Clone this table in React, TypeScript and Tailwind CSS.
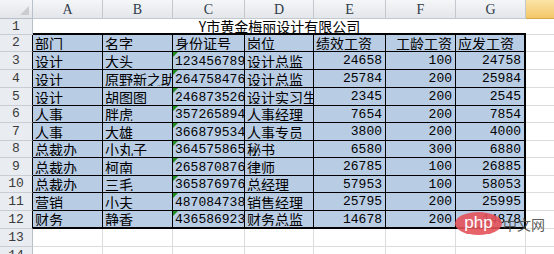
const colLetters = ["A", "B", "C", "D", "E", "F", "G"];
const colWidths = ["w-[70px]", "w-[70px]", "w-[72px]", "w-[69px]", "w-[72px]", "w-[70px]", "w-[70px]"];

// heights of rows 2..12 (the blue table)
const tableHeights = [
  "h-[17px]", "h-[18px]", "h-[18px]", "h-[18px]", "h-[17px]", "h-[18px]",
  "h-[17px]", "h-[18px]", "h-[17px]", "h-[18px]", "h-[18px]",
];

const data: string[][] = [
  ["部门", "名字", "身份证号", "岗位", "绩效工资", "工龄工资", "应发工资"],
  ["设计", "大头", "123456789012345678", "设计总监", "24658", "100", "24758"],
  ["设计", "原野新之助", "264758476012345678", "设计总监", "25784", "200", "25984"],
  ["设计", "胡图图", "246873526012345678", "设计实习生", "2345", "200", "2545"],
  ["人事", "胖虎", "357265894012345678", "人事经理", "7654", "200", "7854"],
  ["人事", "大雄", "366879534012345678", "人事专员", "3800", "200", "4000"],
  ["总裁办", "小丸子", "364575865012345678", "秘书", "6580", "300", "6880"],
  ["总裁办", "柯南", "265870876012345678", "律师", "26785", "100", "26885"],
  ["总裁办", "三毛", "365876976012345678", "总经理", "57953", "100", "58053"],
  ["营销", "小夫", "487084738012345678", "销售经理", "25795", "200", "25995"],
  ["财务", "静香", "436586923012345678", "财务总监", "14678", "200", "14878"],
];

const cjk = "font-['Noto_Sans_CJK_SC','Noto_Sans',sans-serif]";
const mono = "font-['Liberation_Mono','Noto_Sans_CJK_SC',monospace]";

function RowHead({ n, h, dark }: { n: number; h: string; dark?: boolean }) {
  return (
    <div
      className={`${h} w-[33px] shrink-0 flex items-center justify-center border-b border-[#c8cdd4] bg-[#e9ecf0] text-[13px] text-[#3a3a3a] ${mono} ${
        dark ? "border-r border-r-black" : "border-r border-r-[#b9c0c9]"
      }`}
    >
      {n}
    </div>
  );
}

function TableCell({ value, col, row, last }: { value: string; col: number; row: number; last: boolean }) {
  const isHeader = row === 0;
  const isNumber = !isHeader && col >= 4;
  const isId = !isHeader && col === 2;
  const right = isNumber || (isHeader && col === 5);
  const rightBorder = col === 6 ? "border-r-2" : "border-r";
  const bottomBorder = last ? "border-b-2" : "border-b";
  return (
    <div
      className={`${colWidths[col]} relative shrink-0 h-full flex items-center overflow-hidden whitespace-nowrap bg-[#b8cce4] border-black ${rightBorder} ${bottomBorder} ${
        right ? "justify-end pr-[3px]" : "justify-start pl-[2px]"
      } ${isNumber || isId ? `${mono} text-[13px]` : `${cjk} text-[14px]`} text-black leading-none`}
    >
      {isId && (
        <span className="absolute left-0 top-0 h-0 w-0 border-t-[5px] border-r-[5px] border-t-[#1e8c1e] border-r-transparent" />
      )}
      <span className={`overflow-hidden ${isId ? "pt-[1px]" : ""}`}>{value}</span>
    </div>
  );
}

function EmptyCell({ w }: { w: string }) {
  return <div className={`${w} h-full shrink-0 border-r border-b border-[#dadcde]`} />;
}

export default function App() {
  return (
    <div className="relative w-[554px] h-[254px] overflow-hidden bg-white">
      {/* column headers */}
      <div className="flex h-[19px]">
        <div className="relative w-[33px] shrink-0 border-r border-b border-[#b9c0c9] bg-gradient-to-b from-[#f4f5f7] to-[#e2e5e9]">
          <span className="absolute right-[3px] bottom-[3px] h-0 w-0 border-b-[9px] border-l-[9px] border-b-[#c9ccd1] border-l-transparent" />
        </div>
        {colLetters.map((c, i) => (
          <div
            key={c}
            className={`${colWidths[i]} shrink-0 flex items-center justify-center border-r border-b border-[#c3c8ce] bg-gradient-to-b from-[#f5f6f8] to-[#e3e6ea] text-[14px] text-[#2f3b4a] font-['Liberation_Serif',serif]`}
          >
            {c}
          </div>
        ))}
        <div className="w-[70px] shrink-0 flex items-center justify-center border-b border-[#d6a84e] bg-gradient-to-b from-[#fbe3a6] to-[#f3c767] text-[14px] text-[#2f3b4a] font-['Liberation_Serif',serif]">
          H
        </div>
      </div>

      {/* row 1: merged title */}
      <div className="flex h-[16px]">
        <RowHead n={1} h="h-[16px]" />
        <div
          className={`w-[493px] shrink-0 flex items-center justify-center border-b-2 border-black text-[14px] leading-none text-black ${cjk}`}
        >
          Y市黄金梅丽设计有限公司
        </div>
        <div className="flex-1 border-b border-[#dadcde]" />
      </div>

      {/* rows 2-12 */}
      {data.map((r, ri) => (
        <div key={ri} className={`flex ${tableHeights[ri]}`}>
          <RowHead n={ri + 2} h={tableHeights[ri]} dark />
          {r.map((v, ci) => (
            <TableCell key={ci} value={v} col={ci} row={ri} last={ri === data.length - 1} />
          ))}
          <div className="flex-1 border-b border-[#dadcde]" />
        </div>
      ))}

      {/* rows 13-14 empty */}
      {[13, 14].map((n) => (
        <div key={n} className="flex h-[18px]">
          <RowHead n={n} h="h-[18px]" />
          {colWidths.map((w, i) => (
            <EmptyCell key={i} w={w} />
          ))}
          <div className="flex-1 border-b border-[#dadcde]" />
        </div>
      ))}

      {/* watermark */}
      <div className="absolute left-[455px] top-[212px] flex items-center">
        <div className="flex h-[23px] w-[47px] items-center justify-center rounded-[50%] bg-[#e3525a]/90 text-[17px] leading-none text-white font-['Liberation_Sans',sans-serif] pb-[3px]">
          php
        </div>
        <span className={`ml-[1px] text-[14px] leading-none text-[#4a4a4a]/90 ${cjk}`}>中文网</span>
      </div>
    </div>
  );
}
